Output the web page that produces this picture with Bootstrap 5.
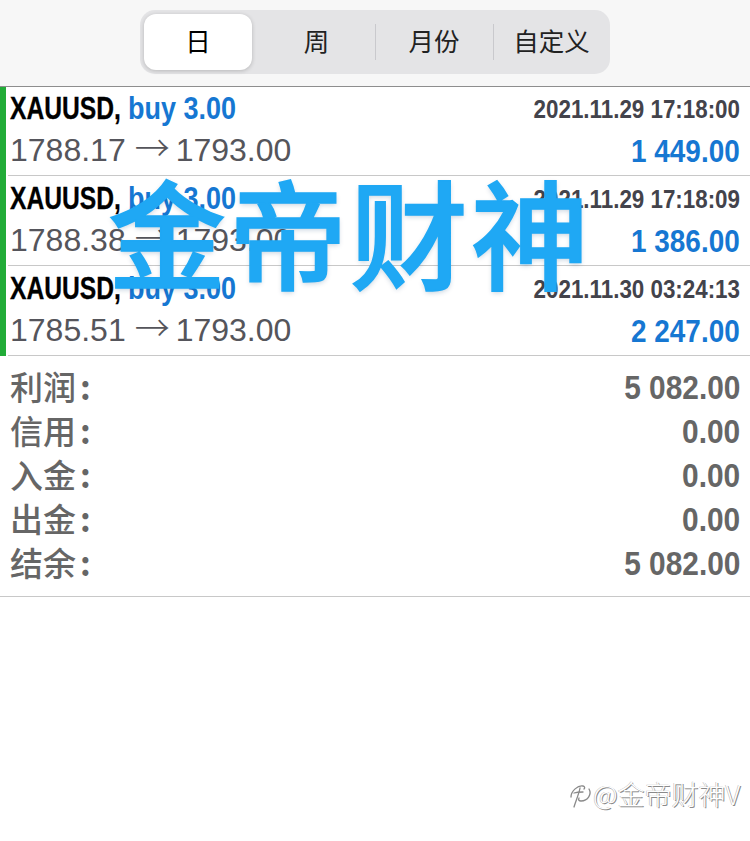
<!DOCTYPE html>
<html lang="zh">
<head>
<meta charset="utf-8">
<title>交易历史</title>
<link rel="stylesheet" href="https://cdn.jsdelivr.net/npm/bootstrap@5.3.0/dist/css/bootstrap.min.css">
<style>
html,body{background:#fff;font-family:"Liberation Sans","Noto Sans CJK SC",sans-serif}
.page{position:relative;width:750px;height:841px;overflow:hidden}
.topbar{height:87px;background:#f7f7f7;border-bottom:1px solid #8e8e8e;padding-top:10px}
.seg{width:470px;height:64px;background:#e4e4e6;border-radius:15px;padding:4px;font-family:"Noto Sans CJK SC",sans-serif;font-size:25.5px;color:#222}
.seg-item{height:56px;display:flex;align-items:center;justify-content:center;position:relative;padding-bottom:4px}
.seg-a{width:108px;background:#fff;border-radius:12px;box-shadow:0 1px 4px rgba(0,0,0,.2);color:#000}
.seg-b{width:123px;padding-left:6px}.seg-c{width:118px}.seg-d{width:113px;padding-left:4px}
.seg-c::after,.seg-d::after{content:"";position:absolute;left:0;top:10px;bottom:10px;width:1px;background:#c9c9cd}
.trade{height:89px;border-left:6px solid #22ac38;padding:0 10px 0 4px;position:relative}
.trade::after{content:"";position:absolute;left:2px;right:0;bottom:0;height:1px;background:#c8c8c8}
.trade+.trade{height:90px}
.ln1{height:46px;padding-top:5px}
.trade+.trade .ln1{height:47px;padding-top:6px}
.ln2{height:42px}
.sq{display:inline-block;white-space:nowrap;font-weight:700}
.sym{font-size:31px;line-height:34px;color:#000;transform:scaleX(.795);transform-origin:left;margin-right:-20px;-webkit-text-stroke:.3px #000}
.dir{font-size:31px;line-height:34px;color:#1677d2;transform:scaleX(.87);transform-origin:left;margin-left:-2px}
.when{font-size:26px;line-height:34px;color:#43434b;transform:scaleX(.86);transform-origin:right}
.amt{font-size:31px;line-height:38px;color:#1677d2;transform:scaleX(.9);transform-origin:right}
.rate{font-size:32px;line-height:34px;color:#55555b;white-space:nowrap;margin-top:-2px}
.arw{display:inline-block;width:33px;margin:0 8px 0 9px;text-align:center;font-family:"Noto Sans CJK SC",sans-serif;font-size:35px;line-height:30px;font-weight:300}
.sum{padding:10px 10px 10px 10px;border-bottom:1px solid #c8c8c8}
.sum-row{height:44px;color:#666;align-items:center}
.sum-k{font-family:"Noto Sans CJK SC",sans-serif;font-size:33px;font-weight:500;line-height:40px;padding-bottom:5px}
.sum-c{margin-left:4px;font-weight:700}
.sum-v{font-size:33px;line-height:44px;transform:scaleX(.905);transform-origin:right}
.wm{position:absolute;left:108px;top:165px;font-family:"Noto Sans CJK SC",sans-serif;font-weight:500;-webkit-text-stroke:1.6px #1fa8f4;font-size:118px;line-height:130px;letter-spacing:3px;color:#1fa8f4;white-space:nowrap;text-shadow:0 2px 5px rgba(0,60,110,.22)}
.wb{position:absolute;left:568px;top:776px;display:flex;align-items:center;font-family:"Noto Sans CJK SC",sans-serif;font-size:27px;line-height:36px;color:#fff;font-weight:300;text-shadow:1px 1px 0 #8a8a8a,-.5px -.5px 0 #b5b5b5;white-space:nowrap}
</style>
</head>
<body>
<div class="page">
  <div class="topbar d-flex justify-content-center">
    <div class="seg d-flex">
      <div class="seg-item seg-a">日</div>
      <div class="seg-item seg-b">周</div>
      <div class="seg-item seg-c">月份</div>
      <div class="seg-item seg-d">自定义</div>
    </div>
  </div>

  <div class="trade">
    <div class="ln1 d-flex justify-content-between">
      <div><span class="sq sym">XAUUSD,</span><span class="sq dir">buy 3.00</span></div>
      <span class="sq when">2021.11.29 17:18:00</span>
    </div>
    <div class="ln2 d-flex justify-content-between">
      <span class="rate">1788.17<span class="arw">→</span>1793.00</span>
      <span class="sq amt">1 449.00</span>
    </div>
  </div>
  <div class="trade">
    <div class="ln1 d-flex justify-content-between">
      <div><span class="sq sym">XAUUSD,</span><span class="sq dir">buy 3.00</span></div>
      <span class="sq when">2021.11.29 17:18:09</span>
    </div>
    <div class="ln2 d-flex justify-content-between">
      <span class="rate">1788.38<span class="arw">→</span>1793.00</span>
      <span class="sq amt">1 386.00</span>
    </div>
  </div>
  <div class="trade">
    <div class="ln1 d-flex justify-content-between">
      <div><span class="sq sym">XAUUSD,</span><span class="sq dir">buy 3.00</span></div>
      <span class="sq when">2021.11.30 03:24:13</span>
    </div>
    <div class="ln2 d-flex justify-content-between">
      <span class="rate">1785.51<span class="arw">→</span>1793.00</span>
      <span class="sq amt">2 247.00</span>
    </div>
  </div>

  <div class="sum">
    <div class="sum-row d-flex justify-content-between"><span class="sum-k">利润<span class="sum-c">:</span></span><span class="sq sum-v">5 082.00</span></div>
    <div class="sum-row d-flex justify-content-between"><span class="sum-k">信用<span class="sum-c">:</span></span><span class="sq sum-v">0.00</span></div>
    <div class="sum-row d-flex justify-content-between"><span class="sum-k">入金<span class="sum-c">:</span></span><span class="sq sum-v">0.00</span></div>
    <div class="sum-row d-flex justify-content-between"><span class="sum-k">出金<span class="sum-c">:</span></span><span class="sq sum-v">0.00</span></div>
    <div class="sum-row d-flex justify-content-between"><span class="sum-k">结余<span class="sum-c">:</span></span><span class="sq sum-v">5 082.00</span></div>
  </div>

  <div class="wm">金帝财神</div>
  <div class="wb">
    <svg width="25" height="32" viewBox="0 0 25 32" fill="none" stroke="#8a8a8a" stroke-width="1.3" stroke-linecap="round"><path d="M3 19C3 13 10 7 15 8c2 .5 2 2 1 3"/><path d="M21 11c3 5-1 12-8 12-2 0-3-1-2-3"/><path d="M6 15c3-1 6-1 9-1M12 10c-1 6-4 12-6 19"/></svg>
    <span>@金帝财神V</span>
  </div>
</div>
<script src="https://cdn.jsdelivr.net/npm/bootstrap@5.3.0/dist/js/bootstrap.bundle.min.js"></script>
</body>
</html>
